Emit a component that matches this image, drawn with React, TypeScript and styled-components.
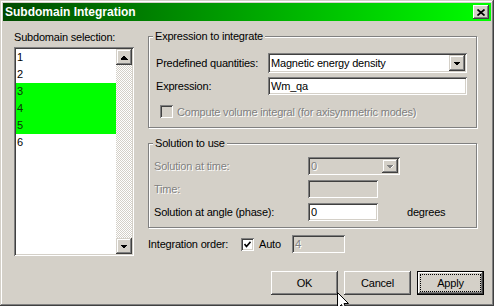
import React from 'react'
import styled, { createGlobalStyle, css } from 'styled-components'

//styling:
const GlobalStyle = createGlobalStyle`
  html, body {
    margin: 0;
    padding: 0;
    background: #d4d0c8;
  }
  body {
    font-family: "Liberation Sans", Arial, sans-serif;
    font-size: 11px;
    letter-spacing: -0.2px;
    color: #000;
  }
`

const sunken = css`
  box-shadow: inset 1px 1px #808080, inset -1px -1px #ffffff, inset 2px 2px #404040, inset -2px -2px #d4d0c8;
`
const raised = css`
  box-shadow: inset -1px -1px #404040, inset 1px 1px #ffffff, inset -2px -2px #808080, inset 2px 2px #d4d0c8;
`
const disabledText = css`
  color: #808080;
  text-shadow: 1px 1px 0 #ffffff;
`

const Window = styled.div`
  position: relative;
  width: 494px;
  height: 306px;
  box-sizing: border-box;
  padding: 3px;
  overflow: hidden;
  background: #d4d0c8;
  box-shadow: inset -1px -1px #404040, inset 1px 1px #d4d0c8, inset -2px -2px #808080, inset 2px 2px #ffffff;
  display: flex;
  flex-direction: column;
`
const TitleBar = styled.div`
  height: 18px;
  display: flex;
  align-items: center;
  justify-content: space-between;
  padding: 0 2px;
  background: linear-gradient(to right, #004a00, #00ff00);
`
const Title = styled.span`
  color: #fff;
  font-weight: bold;
  font-size: 12px;
  letter-spacing: 0;
`
const CloseButton = styled.div`
  width: 16px;
  height: 14px;
  box-sizing: border-box;
  background: #d4d0c8;
  display: flex;
  align-items: center;
  justify-content: center;
  ${raised}
`
const Body = styled.div`
  flex: 1;
  display: flex;
`
const LeftCol = styled.div`
  margin-left: 11px;
  padding-top: 10px;
  width: 120px;
  display: flex;
  flex-direction: column;
`
const Caption = styled.div`
  line-height: 13px;
  white-space: nowrap;
`
const ListBox = styled.div`
  margin-top: 3px;
  height: 209px;
  box-sizing: border-box;
  padding: 2px;
  display: flex;
  background: #fff;
  ${sunken}
`
const Items = styled.div`
  flex: 1;
`
const Item = styled.div<{ $sel?: boolean }>`
  height: 17px;
  line-height: 17px;
  padding-left: 1px;
  background: ${p => (p.$sel ? '#00ff00' : 'transparent')};
  color: ${p => (p.$sel ? '#0a360a' : '#000')};
`
const ScrollBar = styled.div`
  width: 16px;
  display: flex;
  flex-direction: column;
  justify-content: space-between;
  background: repeating-conic-gradient(#d4d0c8 0 25%, #ffffff 0 50%) 0 0 / 2px 2px;
`
const ScrollButton = styled.div`
  width: 16px;
  height: 16px;
  box-sizing: border-box;
  background: #d4d0c8;
  display: flex;
  align-items: center;
  justify-content: center;
  box-shadow: inset -1px -1px #404040, inset 1px 1px #d4d0c8, inset -2px -2px #808080, inset 2px 2px #ffffff;
`
const RightCol = styled.div`
  margin-left: 14px;
  padding-top: 9px;
  width: 336px;
  display: flex;
  flex-direction: column;
`
const Group = styled.fieldset<{ $top: number; $bottom: number; $mt?: number }>`
  margin: ${p => p.$mt ?? 0}px 0 0 0;
  padding: ${p => p.$top}px 0 ${p => p.$bottom}px 0;
  width: 329px;
  min-width: 0;
  box-sizing: border-box;
  border: 1px solid #808080;
  box-shadow: 1px 1px 0 #ffffff, inset 1px 1px 0 #ffffff;
`
const Legend = styled.legend`
  margin-left: 4px;
  padding: 0 2px;
  line-height: 13px;
  background: #d4d0c8;
`
const GroupBody = styled.div<{ $pl: number }>`
  padding-left: ${p => p.$pl}px;
  display: flex;
  flex-direction: column;
`
const Row = styled.div<{ $h: number; $mt?: number }>`
  display: flex;
  align-items: center;
  height: ${p => p.$h}px;
  margin-top: ${p => p.$mt ?? 0}px;
`
const Label = styled.span<{ $w?: number; $disabled?: boolean }>`
  width: ${p => (p.$w ? `${p.$w}px` : 'auto')};
  flex-shrink: 0;
  white-space: nowrap;
  ${p => p.$disabled && disabledText}
`
const Field = styled.div<{ $w: number; $h: number; $disabled?: boolean }>`
  width: ${p => p.$w}px;
  height: ${p => p.$h}px;
  box-sizing: border-box;
  padding: 2px 2px 2px 3px;
  display: flex;
  align-items: center;
  background: ${p => (p.$disabled ? '#d4d0c8' : '#fff')};
  ${sunken}
  ${p => p.$disabled && disabledText}
`
const Combo = styled.div<{ $w: number; $h: number; $disabled?: boolean }>`
  width: ${p => p.$w}px;
  height: ${p => p.$h}px;
  box-sizing: border-box;
  padding: 2px;
  display: flex;
  background: ${p => (p.$disabled ? '#d4d0c8' : '#fff')};
  ${sunken}
`
const ComboText = styled.div<{ $disabled?: boolean }>`
  flex: 1;
  padding-left: 1px;
  display: flex;
  align-items: center;
  white-space: nowrap;
  overflow: hidden;
  ${p => p.$disabled && disabledText}
`
const DropButton = styled.div`
  width: 16px;
  box-sizing: border-box;
  background: #d4d0c8;
  display: flex;
  align-items: center;
  justify-content: center;
  box-shadow: inset -1px -1px #404040, inset 1px 1px #d4d0c8, inset -2px -2px #808080, inset 2px 2px #ffffff;
`
const CheckBox = styled.div<{ $disabled?: boolean; $ml?: number }>`
  width: 13px;
  height: 13px;
  flex-shrink: 0;
  margin-left: ${p => p.$ml ?? 0}px;
  box-sizing: border-box;
  display: flex;
  align-items: center;
  justify-content: center;
  background: ${p => (p.$disabled ? '#d4d0c8' : '#fff')};
  ${sunken}
`
const CheckText = styled.span<{ $disabled?: boolean; $ml: number; $w?: number }>`
  margin-left: ${p => p.$ml}px;
  width: ${p => (p.$w ? `${p.$w}px` : 'auto')};
  white-space: nowrap;
  ${p => p.$disabled && disabledText}
`
const Buttons = styled.div`
  margin-top: 18px;
  display: flex;
  justify-content: flex-end;
  gap: 6px;
`
const Button = styled.div<{ $default?: boolean }>`
  width: 67px;
  height: 24px;
  box-sizing: border-box;
  display: flex;
  background: #d4d0c8;
  ${p =>
    p.$default
      ? css`
          padding: 3px;
          box-shadow: inset 0 0 0 1px #000, inset -2px -2px #404040, inset 2px 2px #ffffff, inset -3px -3px #808080;
        `
      : raised}
`
const ButtonFace = styled.span<{ $focus?: boolean }>`
  flex: 1;
  display: flex;
  align-items: center;
  justify-content: center;
  border: 1px ${p => (p.$focus ? 'dotted #000' : 'solid transparent')};
`
const Cursor = styled.svg`
  position: absolute;
  left: 337px;
  top: 292px;
`

const Arrow = ({ up, disabled }: { up?: boolean; disabled?: boolean }) => (
  <svg width="8" height="5" viewBox="0 0 8 5" shapeRendering="crispEdges" style={{ overflow: 'visible' }}>
    {disabled && <polygon points={up ? '1.5,5.5 8.5,5.5 5,1' : '1.5,1 8.5,1 5,5'} fill="#fff" />}
    <polygon points={up ? '0.5,4.5 7.5,4.5 4,0.5' : '0.5,0.5 7.5,0.5 4,4.5'} fill={disabled ? '#808080' : '#000'} />
  </svg>
)

const CheckMark = () => (
  <svg width="7" height="7" viewBox="0 0 7 7">
    <polyline points="0.5,3 2.5,5.5 6.5,0.8" fill="none" stroke="#000" strokeWidth="1.6" />
  </svg>
)

const items = [1, 2, 3, 4, 5, 6]
const selected = [3, 4, 5]

export default function App() {
  return (
    <>
      <GlobalStyle />
      <Window>
        <TitleBar>
          <Title>Subdomain Integration</Title>
          <CloseButton>
            <svg width="8" height="7" viewBox="0 0 8 7">
              <path d="M0.5 0.5 L7.5 6.5 M7.5 0.5 L0.5 6.5" stroke="#000" strokeWidth="1.7" />
            </svg>
          </CloseButton>
        </TitleBar>
        <Body>
          <LeftCol>
            <Caption>Subdomain selection:</Caption>
            <ListBox>
              <Items>
                {items.map(n => (
                  <Item key={n} $sel={selected.includes(n)}>{n}</Item>
                ))}
              </Items>
              <ScrollBar>
                <ScrollButton><Arrow up /></ScrollButton>
                <ScrollButton><Arrow /></ScrollButton>
              </ScrollBar>
            </ListBox>
          </LeftCol>
          <RightCol>
            <Group $top={10} $bottom={9}>
              <Legend>Expression to integrate</Legend>
              <GroupBody $pl={7}>
                <Row $h={20}>
                  <Label $w={112}>Predefined quantities:</Label>
                  <Combo $w={199} $h={20}>
                    <ComboText>Magnetic energy density</ComboText>
                    <DropButton><Arrow /></DropButton>
                  </Combo>
                </Row>
                <Row $h={18} $mt={4}>
                  <Label $w={112}>Expression:</Label>
                  <Field $w={199} $h={18}>Wm_qa</Field>
                </Row>
                <Row $h={13} $mt={10}>
                  <CheckBox $disabled $ml={4} />
                  <CheckText $disabled $ml={4}>Compute volume integral (for axisymmetric modes)</CheckText>
                </Row>
              </GroupBody>
            </Group>
            <Group $top={7} $bottom={6} $mt={9}>
              <Legend>Solution to use</Legend>
              <GroupBody $pl={5}>
                <Row $h={18}>
                  <Label $w={154} $disabled>Solution at time:</Label>
                  <Combo $w={92} $h={18} $disabled>
                    <ComboText $disabled>0</ComboText>
                    <DropButton><Arrow disabled /></DropButton>
                  </Combo>
                </Row>
                <Row $h={18} $mt={5}>
                  <Label $w={154} $disabled>Time:</Label>
                  <Field $w={70} $h={18} $disabled />
                </Row>
                <Row $h={18} $mt={5}>
                  <Label $w={154}>Solution at angle (phase):</Label>
                  <Field $w={70} $h={18}>0</Field>
                  <CheckText $ml={29}>degrees</CheckText>
                </Row>
              </GroupBody>
            </Group>
            <Row $h={18} $mt={7}>
              <Label $w={93}>Integration order:</Label>
              <CheckBox><CheckMark /></CheckBox>
              <CheckText $ml={5} $w={33}>Auto</CheckText>
              <Field $w={53} $h={18} $disabled>4</Field>
            </Row>
            <Buttons>
              <Button><ButtonFace>OK</ButtonFace></Button>
              <Button><ButtonFace>Cancel</ButtonFace></Button>
              <Button $default><ButtonFace $focus>Apply</ButtonFace></Button>
            </Buttons>
          </RightCol>
        </Body>
        <Cursor width="12" height="19" viewBox="0 0 12 19">
          <path d="M0.5 0.5 L0.5 16.5 L4.5 12.5 L7 18.5 L9.5 17.5 L7 11.5 L11.5 11.5 Z" fill="#fff" stroke="#000" strokeWidth="1" />
        </Cursor>
      </Window>
    </>
  )
}
